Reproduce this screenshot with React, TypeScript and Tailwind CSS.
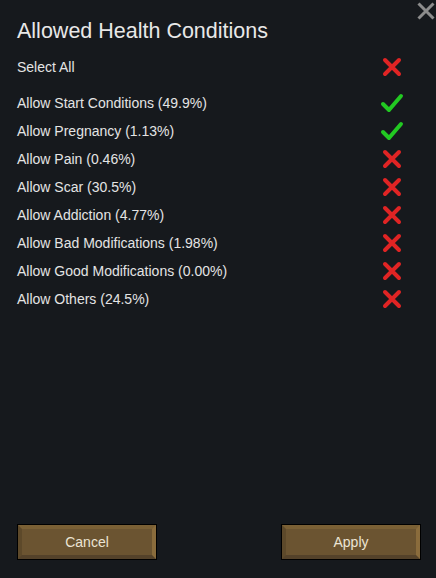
import { FC } from "react";

const rows: { label: string; on: boolean }[] = [
  { label: "Allow Start Conditions (49.9%)", on: true },
  { label: "Allow Pregnancy (1.13%)", on: true },
  { label: "Allow Pain (0.46%)", on: false },
  { label: "Allow Scar (30.5%)", on: false },
  { label: "Allow Addiction (4.77%)", on: false },
  { label: "Allow Bad Modifications (1.98%)", on: false },
  { label: "Allow Good Modifications (0.00%)", on: false },
  { label: "Allow Others (24.5%)", on: false },
];

const Cross: FC = () => (
  <svg width="22" height="22" viewBox="0 0 22 22">
    <path d="M4 4 L18 18 M18 4 L4 18" stroke="#e02424" strokeWidth="4" strokeLinecap="round" />
  </svg>
);

const Check: FC = () => (
  <svg width="24" height="22" viewBox="0 0 24 22">
    <path d="M3 12 L9 18 L21 4" stroke="#22c922" strokeWidth="4" strokeLinecap="round" strokeLinejoin="round" fill="none" />
  </svg>
);

const Row: FC<{ label: string; on: boolean }> = ({ label, on }) => (
  <div className="flex items-center h-[28px]">
    <span className="flex-grow">{label}</span>
    <div className="w-[24px] flex justify-center mr-[32px]">{on ? <Check /> : <Cross />}</div>
  </div>
);

const Button: FC<{ label: string }> = ({ label }) => (
  <div className="w-[140px] h-[36px] border border-black">
    <div className="h-full flex items-center justify-center bg-[#6b5431] border-[4px] border-t-[#7a6035] border-l-[#5d492a] border-b-[#54422a] border-r-[#8a6c3c] text-[#ece4d4] text-[14px]">
      {label}
    </div>
  </div>
);

const App: FC<{}> = () => {
  return (
    <div
      className="relative w-[436px] h-[578px] bg-[#16191d] text-[#e4e4e4] flex flex-col"
      style={{ fontFamily: '"Liberation Sans", Arial, sans-serif' }}
    >
      <svg className="absolute top-[2px] left-[417px]" width="18" height="18" viewBox="0 0 18 18">
        <path d="M1.5 1.5 L16.5 16.5 M16.5 1.5 L1.5 16.5" stroke="#8c8c8c" strokeWidth="3" />
      </svg>
      <h1 className="pl-[17px] pt-[19px] text-[21.5px] leading-[24px] text-[#e8e8e8]">
        Allowed Health Conditions
      </h1>
      <div className="pl-[17px] mt-[10px] text-[14px]">
        <Row label="Select All" on={false} />
        <div className="mt-[8px]">
          {rows.map((r) => (
            <Row key={r.label} label={r.label} on={r.on} />
          ))}
        </div>
      </div>
      <div className="mt-auto mb-[18px] pl-[17px] pr-[15px] flex justify-between">
        <Button label="Cancel" />
        <Button label="Apply" />
      </div>
    </div>
  );
};

export default App;
